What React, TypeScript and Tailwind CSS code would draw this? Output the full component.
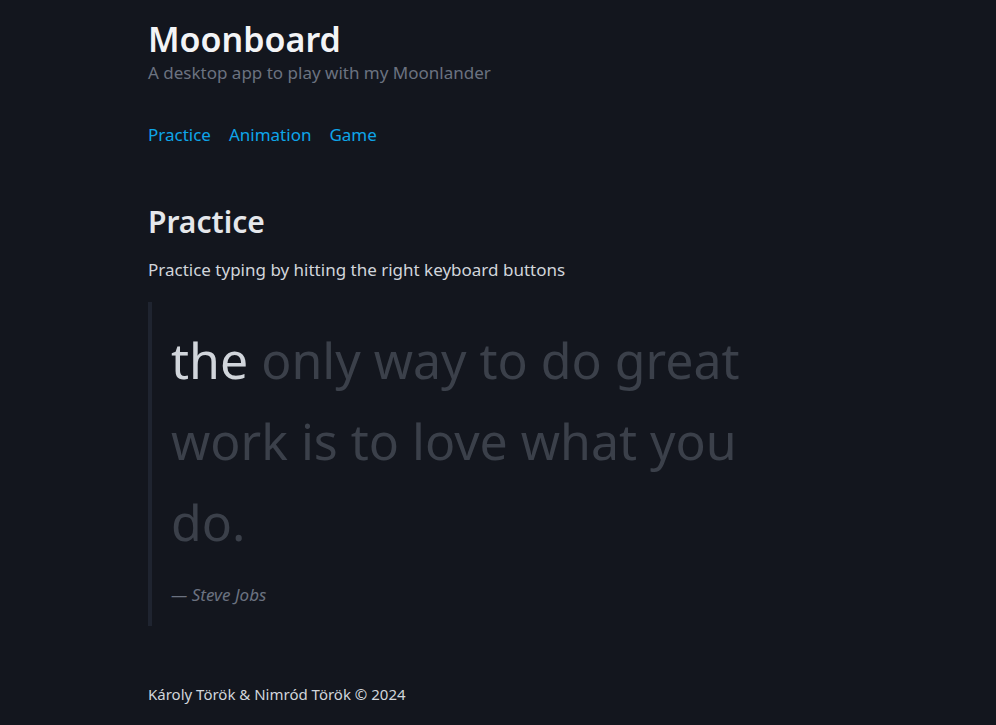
const links = ['Practice', 'Animation', 'Game'];

const App = () => {
  return (
    <div
      className="min-h-screen bg-[#13161e] text-[#d1d5db]"
      style={{ fontFamily: "'Noto Sans', 'Open Sans', sans-serif" }}
    >
      <div className="mx-auto max-w-[700px] pt-[17px] pb-6">
        <header>
          <h1 className="text-[34px] leading-[44px] font-semibold text-[#f3f4f6]">Moonboard</h1>
          <p className="text-[17px] leading-[24px] text-[#6b7280]">A desktop app to play with my Moonlander</p>
          <nav className="mt-[38px] flex gap-[18px] text-[17px] leading-[24px] text-[#0ea5e9]">
            {links.map((l) => (
              <a key={l} href="#">
                {l}
              </a>
            ))}
          </nav>
        </header>

        <section className="mt-[55px]">
          <h2 className="text-[30px] leading-[40px] font-semibold text-[#e5e7eb]">Practice</h2>
          <p className="mt-[16px] text-[17px] leading-[24px] text-[#d1d5db]">
            Practice typing by hitting the right keyboard buttons
          </p>
          <blockquote className="mt-[20px] border-l-4 border-[#1f2430] pl-[19px] pt-[18px] pb-[19px]">
            <p className="w-[600px] text-[50px] leading-[81px]">
              <span className="text-[#d1d5db]">the </span>
              <span className="text-[#3b404a]">only way to do great work is to love what you do.</span>
            </p>
            <p className="mt-[20px] text-[17px] leading-[24px] italic text-[#6b7280]">— Steve Jobs</p>
          </blockquote>
        </section>

        <footer className="mt-[57px] text-[15px] leading-[22px] text-[#d1d5db]">
          Károly Török &amp; Nimród Török © 2024
        </footer>
      </div>
    </div>
  );
};

export default App;
